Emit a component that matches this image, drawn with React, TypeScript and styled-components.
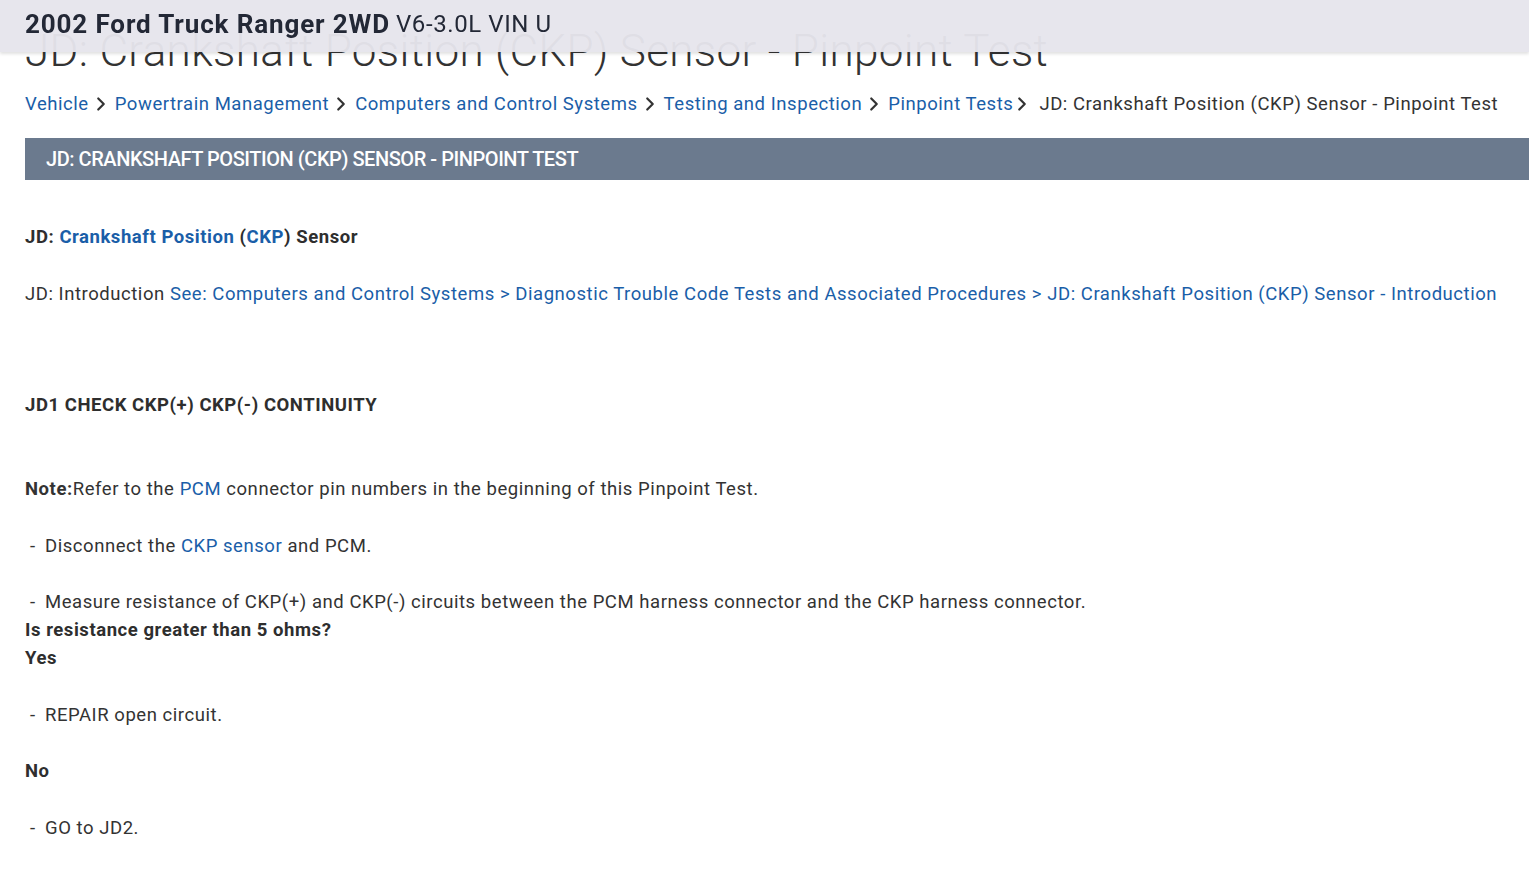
import React from 'react'
import styled, { createGlobalStyle } from 'styled-components'
import { ChevronRight } from 'lucide-react'

const GlobalStyle = createGlobalStyle`
  html, body {
    margin: 0;
    padding: 0;
    background: #ffffff;
    font-family: Roboto, "Liberation Sans", Arial, sans-serif;
    color: #333333;
    overflow: hidden;
  }
`

const VehicleBar = styled.header`
  position: fixed;
  top: 0;
  left: 0;
  right: 0;
  height: 52px;
  display: flex;
  align-items: center;
  padding: 0 0 5px 25px;
  box-sizing: border-box;
  background: rgba(230, 229, 236, 0.96);
  box-shadow: 0 2px 3px rgba(0, 0, 0, 0.12);
  z-index: 10;
`

const VehicleName = styled.span`
  font-size: 26px;
  font-weight: 700;
  letter-spacing: 0.87px;
  color: #232836;
  margin-right: 6px;
`

const EngineName = styled.span`
  font-size: 24px;
  font-weight: 400;
  letter-spacing: 0.6px;
  color: #232836;
`

const Page = styled.main`
  padding: 27px 0 40px 25px;
`

const Title = styled.h1`
  margin: 0;
  font-size: 44px;
  line-height: 48px;
  font-weight: 300;
  letter-spacing: 0.35px;
  color: #333333;
  white-space: nowrap;
`

const Crumbs = styled.nav`
  display: flex;
  align-items: center;
  margin-top: 15px;
  font-size: 18.5px;
  letter-spacing: 0.55px;
  line-height: 28px;
  white-space: nowrap;
`

const Crumb = styled.a`
  color: #1a5ea8;
  text-decoration: none;
`

const Current = styled.span`
  color: #333333;
  margin-left: 6px;
`

const Chevron = styled(ChevronRight)<{ $last?: boolean }>`
  color: #333333;
  margin: 0 ${p => (p.$last ? 0 : 3)}px 0 ${p => (p.$last ? -2 : 1)}px;
  flex: none;
`

const SectionBar = styled.div`
  margin-top: 20px;
  height: 42px;
  display: flex;
  align-items: center;
  padding-left: 21px;
  background: #6b7a8e;
  color: #ffffff;
  font-size: 20px;
  font-weight: 500;
  letter-spacing: -0.45px;
  text-transform: uppercase;
  white-space: nowrap;
`

const Body = styled.section`
  display: flex;
  flex-direction: column;
  font-size: 18.5px;
  letter-spacing: 0.55px;
  line-height: 28px;
`

const Para = styled.p<{ $gap: number; $bold?: boolean }>`
  margin: ${p => p.$gap}px 0 0;
  font-weight: ${p => (p.$bold ? 700 : 400)};
  color: ${p => (p.$bold ? '#2e2e2e' : '#333333')};
  white-space: nowrap;
`

const Step = styled(Para)`
  display: flex;
`

const Dash = styled.span`
  width: 20px;
  padding-left: 5px;
  box-sizing: border-box;
`

const Link = styled.a`
  color: #1a5ea8;
  text-decoration: none;
`

const crumbs = [
  'Vehicle',
  'Powertrain Management',
  'Computers and Control Systems',
  'Testing and Inspection',
  'Pinpoint Tests',
]

export default function App() {
  return (
    <>
      <GlobalStyle />
      <VehicleBar>
        <VehicleName>2002 Ford Truck Ranger 2WD</VehicleName>
        <EngineName>V6-3.0L VIN U</EngineName>
      </VehicleBar>
      <Page>
        <Title>JD: Crankshaft Position (CKP) Sensor - Pinpoint Test</Title>
        <Crumbs>
          {crumbs.map((c, i) => (
            <React.Fragment key={c}>
              {i > 0 && <Chevron size={22} strokeWidth={2.4} />}
              <Crumb href="#">{c}</Crumb>
            </React.Fragment>
          ))}
          <Chevron $last size={22} strokeWidth={2.4} />
          <Current>JD: Crankshaft Position (CKP) Sensor - Pinpoint Test</Current>
        </Crumbs>
        <SectionBar>JD: Crankshaft Position (CKP) Sensor - Pinpoint Test</SectionBar>
        <Body>
          <Para $gap={43} $bold>
            JD: <Link href="#">Crankshaft Position</Link> (<Link href="#">CKP</Link>) Sensor
          </Para>
          <Para $gap={29}>
            JD: Introduction{' '}
            <Link href="#">
              See: Computers and Control Systems &gt; Diagnostic Trouble Code Tests and Associated Procedures &gt; JD:
              Crankshaft Position (CKP) Sensor - Introduction
            </Link>
          </Para>
          <Para $gap={83} $bold>
            JD1 CHECK CKP(+) CKP(-) CONTINUITY
          </Para>
          <Para $gap={56}>
            <b>Note:</b>Refer to the <Link href="#">PCM</Link> connector pin numbers in the beginning of this Pinpoint
            Test.
          </Para>
          <Step $gap={29}>
            <Dash>-</Dash>
            <span>
              Disconnect the <Link href="#">CKP sensor</Link> and PCM.
            </span>
          </Step>
          <Step $gap={28}>
            <Dash>-</Dash>
            <span>
              Measure resistance of CKP(+) and CKP(-) circuits between the PCM harness connector and the CKP harness
              connector.
            </span>
          </Step>
          <Para $gap={0} $bold>
            Is resistance greater than 5 ohms?
          </Para>
          <Para $gap={0} $bold>
            Yes
          </Para>
          <Step $gap={29}>
            <Dash>-</Dash>
            <span>REPAIR open circuit.</span>
          </Step>
          <Para $gap={28} $bold>
            No
          </Para>
          <Step $gap={29}>
            <Dash>-</Dash>
            <span>GO to JD2.</span>
          </Step>
        </Body>
      </Page>
    </>
  )
}
